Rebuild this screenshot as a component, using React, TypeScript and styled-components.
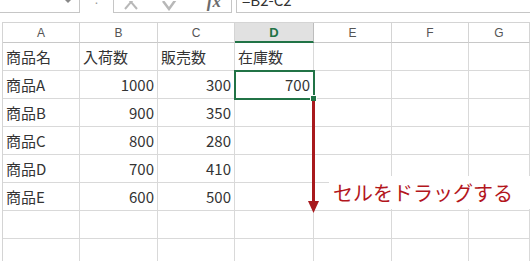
import React from 'react';
import styled, { createGlobalStyle, css } from 'styled-components';

const GlobalStyle = createGlobalStyle`
  html, body {
    margin: 0;
    padding: 0;
    background: #ffffff;
  }
  body {
    width: 530px;
    height: 261px;
    overflow: hidden;
    font-family: "Noto Sans CJK JP", "Noto Sans", sans-serif;
  }
`;

const Page = styled.div`
  position: relative;
  width: 530px;
  height: 261px;
  overflow: hidden;
  background: #fff;
`;

const FormulaBar = styled.div`
  display: flex;
  align-items: stretch;
  height: 24px;
  margin-top: -11px;
  margin-bottom: 9px;
`;

const NameBox = styled.div`
  width: 80px;
  box-sizing: border-box;
  border: 1px solid #c6c6c6;
  border-left: none;
  position: relative;
  &::after {
    content: '';
    position: absolute;
    right: 8px;
    top: 10px;
    border-left: 3px solid transparent;
    border-right: 3px solid transparent;
    border-top: 3px solid #888;
  }
`;

const Separator = styled.div`
  width: 33px;
  display: flex;
  justify-content: center;
  color: #999;
  font-size: 14px;
  line-height: 20px;
  font-family: "Liberation Sans", sans-serif;
`;

const ButtonBox = styled.div`
  width: 119px;
  box-sizing: border-box;
  border: 1px solid #c6c6c6;
  display: flex;
  align-items: flex-end;
  padding: 0 8px 1px 8px;
  gap: 22px;
  color: #b5b5b5;
`;

const FxLabel = styled.span`
  font-family: "Liberation Serif", serif;
  font-style: italic;
  font-weight: bold;
  font-size: 17px;
  color: #6b6b6b;
  line-height: 18px;
  margin-left: auto;
  margin-right: 2px;
`;

const FormulaInput = styled.div`
  flex: 1;
  margin-left: 4px;
  box-sizing: border-box;
  border: 1px solid #c6c6c6;
  border-right: none;
  padding-left: 5px;
  font-size: 15px;
  line-height: 15px;
  color: #333;
  display: flex;
  align-items: flex-start;
  padding-top: 2px;
`;

const Sheet = styled.div`
  display: grid;
  grid-template-columns: 77px 78px 77px 79px 78px 77px 1fr;
  grid-template-rows: 20px;
  grid-auto-rows: 28px;
  margin-left: 2px;
  border-left: 1px solid #d4d4d4;
  border-top: 1px solid #d4d4d4;
`;

const HeaderCell = styled.div<{ $active?: boolean }>`
  box-sizing: border-box;
  border-right: 1px solid #d4d4d4;
  border-bottom: 1px solid #c8c8c8;
  display: flex;
  align-items: center;
  justify-content: center;
  font-family: "Liberation Sans", "Noto Sans", sans-serif;
  font-size: 12px;
  color: #555;
  ${({ $active }) =>
    $active &&
    css`
      background: #e1e1e1;
      color: #217346;
      font-weight: bold;
      border-bottom: 2px solid #217346;
      border-right-color: #bdbdbd;
      font-size: 13px;
    `}
`;

const Cell = styled.div<{ $num?: boolean; $selected?: boolean }>`
  position: relative;
  box-sizing: border-box;
  border-right: 1px solid #d9d9d9;
  border-bottom: 1px solid #d9d9d9;
  display: flex;
  align-items: flex-end;
  justify-content: ${({ $num }) => ($num ? 'flex-end' : 'flex-start')};
  padding: 0 3px 3px 3px;
  font-size: 15px;
  line-height: 20px;
  color: #333;
  white-space: nowrap;
  ${({ $selected }) =>
    $selected &&
    css`
      outline: 2px solid #217346;
      outline-offset: -1px;
      z-index: 1;
    `}
`;

const FillHandle = styled.span`
  position: absolute;
  right: -4px;
  bottom: -4px;
  width: 5px;
  height: 5px;
  background: #217346;
  border: 1px solid #fff;
  z-index: 2;
`;

const Arrow = styled.svg`
  position: absolute;
  left: 308px;
  top: 101px;
  z-index: 3;
`;

const Note = styled.div`
  position: absolute;
  left: 329px;
  top: 176px;
  width: 201px;
  height: 33px;
  background: #fff;
  padding-left: 4px;
  box-sizing: border-box;
  font-size: 20px;
  line-height: 33px;
  color: #b3161c;
  z-index: 3;
`;

const columns = ['A', 'B', 'C', 'D', 'E', 'F', 'G'];

const rows: (string | number)[][] = [
  ['商品名', '入荷数', '販売数', '在庫数'],
  ['商品A', 1000, 300, 700],
  ['商品B', 900, 350],
  ['商品C', 800, 280],
  ['商品D', 700, 410],
  ['商品E', 600, 500],
  [],
  [],
];

const App: React.FC = () => {
  return (
    <Page>
      <GlobalStyle />
      <FormulaBar>
        <NameBox />
        <Separator>:</Separator>
        <ButtonBox>
          <svg width="18" height="10" viewBox="0 0 18 10">
            <path d="M3 -6 L15 8 M15 -6 L3 8" stroke="#b8b8b8" strokeWidth="2" fill="none" />
          </svg>
          <svg width="18" height="10" viewBox="0 0 18 10">
            <path d="M1 0 L7 8 L17 -6" stroke="#b8b8b8" strokeWidth="2.5" fill="none" />
          </svg>
          <FxLabel>fx</FxLabel>
        </ButtonBox>
        <FormulaInput>=B2-C2</FormulaInput>
      </FormulaBar>
      <Sheet>
        {columns.map((c) => (
          <HeaderCell key={c} $active={c === 'D'}>
            {c}
          </HeaderCell>
        ))}
        {rows.map((row, r) =>
          columns.map((c, i) => {
            const v = row[i];
            const selected = r === 1 && i === 3;
            return (
              <Cell key={`${r}-${c}`} $num={typeof v === 'number'} $selected={selected}>
                {v}
                {selected && <FillHandle />}
              </Cell>
            );
          })
        )}
      </Sheet>
      <Arrow width="11" height="113" viewBox="0 0 11 113">
        <line x1="5.5" y1="0" x2="5.5" y2="102" stroke="#a8191d" strokeWidth="3" />
        <polygon points="0,100 11,100 5.5,112" fill="#a8191d" />
      </Arrow>
      <Note>セルをドラッグする</Note>
    </Page>
  );
};

export default App;
